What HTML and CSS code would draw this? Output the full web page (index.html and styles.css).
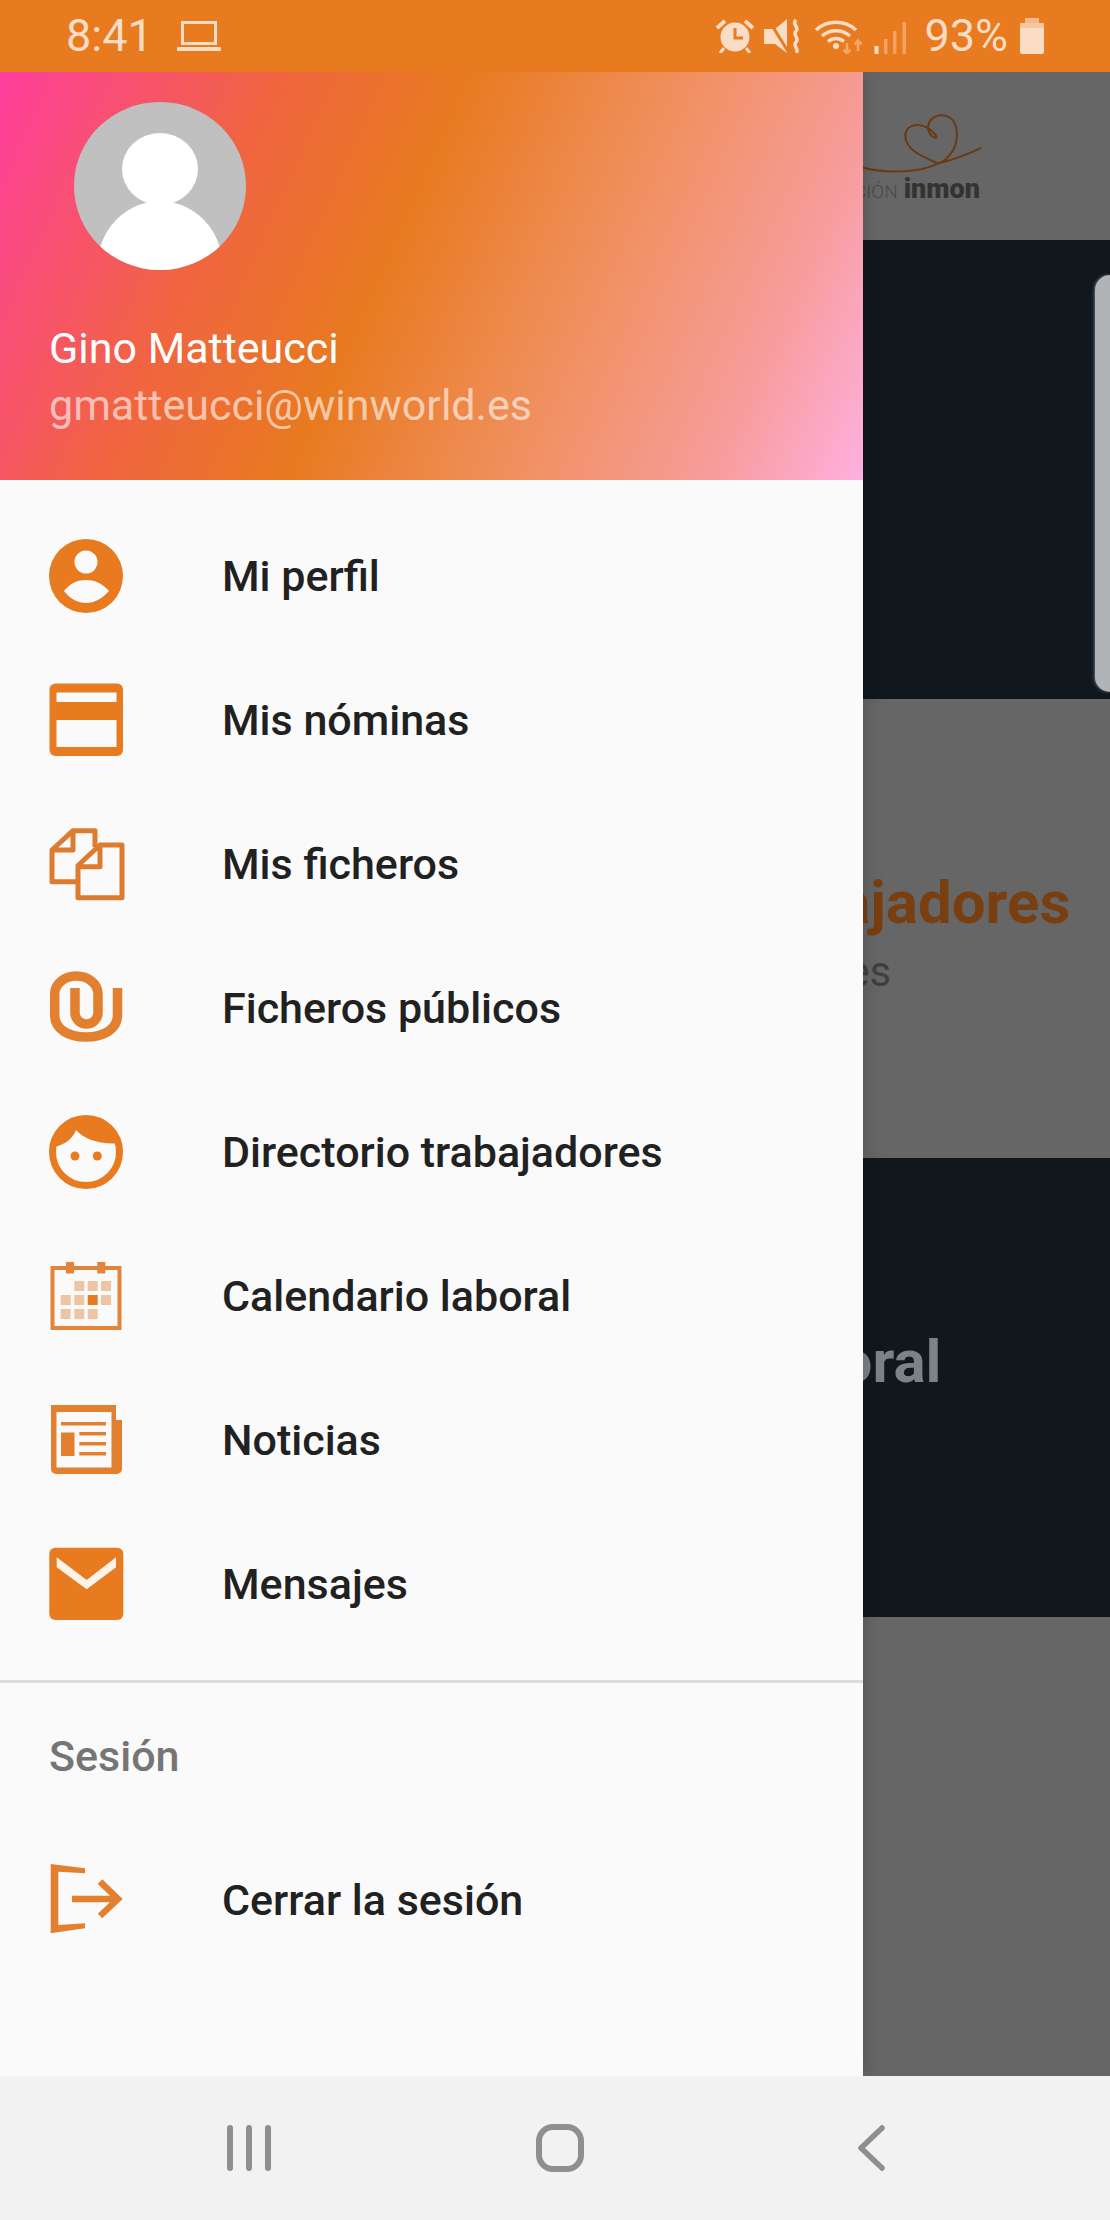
FILE: index.html
```html
<!DOCTYPE html>
<html lang="es">
<head>
<meta charset="utf-8">
<title>Menú</title>
<link rel="stylesheet" href="styles.css">
</head>
<body>
<div class="phone">
  <header class="status">
    <div class="status-left">
      <span class="status-text">8:41</span>
      <svg class="st-laptop" width="44" height="31" viewBox="0 0 44 31"><rect x="5.500" y="1.500" width="33" height="21" fill="none" stroke="#fbdcc4" stroke-width="3"/><rect x="0" y="26" width="44" height="4" rx="1" fill="#fbdcc4"/></svg>
    </div>
    <div class="status-right">
      <svg class="st-alarm" width="39" height="34" viewBox="0 0 39 34"><circle cx="20" cy="18" r="14.500" fill="#fbdcc4"/><path d="M20 9V19H28" fill="none" stroke="#e87a20" stroke-width="3"/><path d="M2 9L10 2M30 2L38 9" stroke="#fbdcc4" stroke-width="4" fill="none"/><path d="M9 29L5 34M31 29L35 34" stroke="#fbdcc4" stroke-width="3" fill="none"/></svg>
      <svg class="st-mute" width="36" height="34" viewBox="0 0 36 34"><path d="M0 10H11L23 0V34L11 25H0Z" fill="#fbdcc4"/><path d="M4 0L25 34" stroke="#e87a20" stroke-width="3"/><path d="M32 1C27 5 36 8 32 12C28 16 36 19 32 23C28 27 36 30 32 34" fill="none" stroke="#fbdcc4" stroke-width="3.500"/></svg>
      <svg class="st-wifi" width="49" height="36" viewBox="0 0 49 36"><path d="M1 12A30 30 0 0 1 41 12M7 18A21 21 0 0 1 35 18M13 23.500A12 12 0 0 1 29 23.500" fill="none" stroke="#fbdcc4" stroke-width="3.500"/><circle cx="21" cy="28" r="3" fill="#fbdcc4"/><path d="M32 25V35M28.500 31.500L32 35.500L35.500 31.500M43 33V23M39.500 26.500L43 22.500L46.500 26.500" fill="none" stroke="#f6a765" stroke-width="2.500"/></svg>
      <svg class="st-signal" width="33" height="33" viewBox="0 0 33 33"><rect x="0.500" y="25" width="4" height="8" fill="#fbdcc4"/><rect x="10" y="18" width="3.500" height="15" fill="#f3a262"/><rect x="19" y="10" width="3.500" height="23" fill="#f3a262"/><rect x="28.500" y="1" width="3.500" height="32" fill="#f3a262"/></svg>
      <span class="status-text st-pct">93%</span>
      <svg class="st-batt" width="24" height="36" viewBox="0 0 24 36"><rect x="5" y="0" width="14" height="5" fill="#f4b98a"/><rect x="0" y="5" width="24" height="31" rx="2" fill="#fbdcc4"/><rect x="0" y="5" width="24" height="5" rx="2" fill="#f4c7a2"/></svg>
    </div>
  </header>

  <main class="stage">
    <div class="appbar">
      <svg class="logo-mark" width="246" height="168" viewBox="11 36 739 504"><path d="M11 323C80 340 180 340 235 310C190 290 135 270 137 225C140 190 190 180 228 225C240 240 210 235 205 205C205 170 240 160 265 170C300 185 300 250 270 285C260 297 245 310 235 310C280 300 330 280 362 265" fill="none" stroke="#6b3a10" stroke-width="6" stroke-linecap="round"/></svg>
      <div class="logo-text"><span class="logo-thin">FUNDACIÓN</span> <span class="logo-bold">inmon</span></div>
    </div>
    <section class="band band-dark band-top"><div class="peek-card"></div></section>
    <section class="band band-gray">
      <h2 class="band-title band-title-orange">Directorio trabajadores</h2>
      <p class="band-sub">Listado de trabajadores</p>
    </section>
    <section class="band band-dark">
      <h2 class="band-title band-title-light">Calendario laboral</h2>
    </section>
    <section class="band band-gray"></section>

    <aside class="drawer">
      <div class="drawer-head">
        <div class="avatar">
          <svg width="172" height="168" viewBox="0 0 172 168"><ellipse cx="86" cy="67" rx="38" ry="36" fill="#fff"/><path d="M20 168L27 143C36 115 62 99 86 99C110 99 136 115 145 143L152 168Z" fill="#fff"/></svg>
        </div>
        <div class="user-name">Gino Matteucci</div>
        <div class="user-mail">gmatteucci@winworld.es</div>
      </div>
      <nav class="menu">
        <a class="row">
          <svg class="ico" width="110" height="110" viewBox="0 0 110 110"><circle cx="56" cy="55" r="37" fill="#e87a20"/><circle cx="56" cy="41" r="11.500" fill="#fafafa"/><path d="M34 70C40 62 48 59 56 59C64 59 72 62 79 70C72 78 64 82 56 82C48 82 40 78 34 70Z" fill="#fafafa"/></svg>
          <span class="label">Mi perfil</span>
        </a>
        <a class="row">
          <svg class="ico" width="110" height="110" viewBox="0 0 110 110"><rect x="19.500" y="18.500" width="73.500" height="72.500" rx="6" fill="#e87a20"/><rect x="26.500" y="27.500" width="60" height="9.500" fill="#fafafa"/><rect x="26.500" y="55" width="60" height="27" fill="#fafafa"/></svg>
          <span class="label">Mis nóminas</span>
        </a>
        <a class="row">
          <svg class="ico" width="110" height="110" viewBox="0 0 110 110"><g fill="none" stroke="#dd7c2f" stroke-width="5" stroke-linejoin="round"><path d="M48 72.700H22V41L43 21.700H65V38M22 41H43V22"/><path d="M48 56.500L70 36H92V88.700H48ZM48 57.700H70V36" fill="#fafafa"/></g></svg>
          <span class="label">Mis ficheros</span>
        </a>
        <a class="row">
          <svg class="ico" width="110" height="110" viewBox="0 0 110 110"><path d="M45 35V60A11.500 11 0 0 0 68 60V41A21.650 18 0 0 0 24.700 41V62C24.700 76 38 84 56 84C74 84 87.500 76 87.500 62V35" fill="none" stroke="#e2802f" stroke-width="9.500"/></svg>
          <span class="label">Ficheros públicos</span>
        </a>
        <a class="row">
          <svg class="ico" width="110" height="110" viewBox="0 0 110 110"><circle cx="56" cy="55" r="33.500" fill="#fafafa" stroke="#e87a20" stroke-width="7"/><path d="M21 50C30 50 42 44 46 33C54 42 70 48 91 46A37 37 0 0 0 21 50Z" fill="#e87a20"/><circle cx="45" cy="59" r="4.500" fill="#e87a20"/><circle cx="67.300" cy="59" r="4.500" fill="#e87a20"/></svg>
          <span class="label">Directorio trabajadores</span>
        </a>
        <a class="row">
          <svg class="ico" width="110" height="110" viewBox="0 0 110 110"><rect x="22.500" y="27" width="67" height="60" fill="none" stroke="#e2853a" stroke-width="4"/><rect x="36" y="21" width="8" height="11.500" fill="#e2853a"/><rect x="67.300" y="21" width="8" height="11.500" fill="#e2853a"/><g fill="#eec4a5"><rect x="44.300" y="40" width="10" height="10"/><rect x="57.700" y="40" width="10" height="10"/><rect x="71" y="40" width="10" height="10"/><rect x="30.700" y="54" width="10" height="10"/><rect x="44.300" y="54" width="10" height="10"/><rect x="71" y="54" width="10" height="10"/><rect x="30.700" y="68" width="10" height="10"/><rect x="44.300" y="68" width="10" height="10"/><rect x="57.700" y="68" width="10" height="10"/></g><rect x="57.700" y="54" width="10" height="10" fill="#e87a20"/></svg>
          <span class="label">Calendario laboral</span>
        </a>
        <a class="row">
          <svg class="ico" width="110" height="110" viewBox="0 0 110 110"><path d="M21 20H86V35H92V84A5 5 0 0 1 87 89H26A5 5 0 0 1 21 84Z" fill="#e2802f"/><rect x="26.500" y="27" width="55" height="55.500" fill="#fafafa"/><g fill="#e2802f"><rect x="31" y="37" width="45" height="3.500"/><rect x="31" y="47.500" width="13.500" height="23.500"/><rect x="49.300" y="47" width="26.700" height="3.500"/><rect x="49.300" y="57" width="26.700" height="3.500"/><rect x="49.300" y="67" width="26.700" height="3.500"/></g></svg>
          <span class="label">Noticias</span>
        </a>
        <a class="row">
          <svg class="ico" width="110" height="110" viewBox="0 0 110 110"><rect x="19.300" y="18.700" width="74" height="72.300" rx="6" fill="#e87a20"/><path d="M26.700 28.300L56.700 51L86 28.300V38.300L56.700 60.300L26.700 38.300Z" fill="#fdf3e8"/></svg>
          <span class="label">Mensajes</span>
        </a>
      </nav>
      <div class="menu-sep"></div>
      <div class="section-title">Sesión</div>
      <a class="row">
        <svg class="ico" width="110" height="110" viewBox="0 0 110 110"><path d="M20.700 19L55 23.300V28.300L28.300 26.700V80L55 78.300V83.300L20.700 88.300Z" fill="#e2802f"/><path d="M42 54H87M70 36.700L88 54L70 71" fill="none" stroke="#e2802f" stroke-width="6.500"/></svg>
        <span class="label">Cerrar la sesión</span>
      </a>
    </aside>
  </main>

  <footer class="navbar">
    <div class="nav-slot"><svg width="46" height="46" viewBox="0 0 46 46"><path d="M4 3V43M23 3V43M42 3V43" fill="none" stroke="#8f8f8f" stroke-width="6" stroke-linecap="round"/></svg></div>
    <div class="nav-slot"><svg width="50" height="50" viewBox="0 0 50 50"><rect x="4" y="4" width="42" height="42" rx="14" fill="none" stroke="#8f8f8f" stroke-width="6"/></svg></div>
    <div class="nav-slot"><svg width="30" height="46" viewBox="0 0 30 46"><path d="M26 3L5 23L26 43" fill="none" stroke="#8f8f8f" stroke-width="5.500" stroke-linecap="round" stroke-linejoin="round"/></svg></div>
  </footer>
</div>
</body>
</html>
```
FILE: styles.css
```css
* { box-sizing: border-box; }
html, body { margin: 0; padding: 0; }
body { font-family: Roboto, "Liberation Sans", sans-serif; background: #f2f2f2; }

.phone { width: 1110px; height: 2220px; display: flex; flex-direction: column; overflow: hidden; }

.status { height: 72px; flex: none; background: #e87a20; display: flex; justify-content: space-between; align-items: center; padding: 0 66px; color: #fbdcc4; }
.status-left, .status-right { display: flex; align-items: center; }
.status-text { font-size: 45px; line-height: 72px; font-weight: 400; }
.st-laptop { margin-left: 24px; }
.st-mute { margin-left: 10px; }
.st-wifi { margin-left: 15px; }
.st-signal { margin-left: 10px; margin-top: 2px; }
.st-pct { margin-left: 17px; }
.st-batt { margin-left: 12px; }

.stage { position: relative; flex: 1; display: flex; flex-direction: column; overflow: hidden; background: #666; }

.appbar { height: 168px; flex: none; background: #666; position: relative; overflow: hidden; }
.logo-mark { display: block; margin-left: auto; width: 247px; }
.logo-text { position: absolute; right: 130px; top: 100px; white-space: nowrap; line-height: 34px; color: #333; }
.logo-thin { font-size: 19px; font-weight: 300; color: #4a4a4a; }
.logo-bold { font-size: 27px; font-weight: 900; margin-left: 2px; }

.band { height: 459px; flex: none; padding: 169px 0 0 451px; }
.band-gray { background: #666; }
.band-dark { background: #10181e; }
.band-top { display: flex; justify-content: flex-end; padding: 35px 0 7px 0; height: 459px; }
.peek-card { width: 15px; background: #b0b4b6; border-radius: 20px 0 0 20px; box-shadow: -1px 0 3px rgba(176,180,182,.5); }
.band-title { margin: 0; font-size: 60px; line-height: 70px; font-weight: 700; white-space: nowrap; }
.band-title-orange { color: #7a3f10; }
.band-title-light { color: #7d8286; }
.band-sub { margin: 7px 0 0; font-size: 42px; line-height: 54px; color: #3f3f3f; white-space: nowrap; }

.drawer { position: absolute; left: 0; top: 0; bottom: 0; width: 863px; background: #fafafa; box-shadow: 0 0 18px rgba(0,0,0,.22); }
.drawer-head { height: 408px; padding: 30px 0 0 49px; background: linear-gradient(114deg, #ff3e9e 0%, #f0653f 27%, #e87a20 45%, #f0905f 66%, #f79c9a 85%, #ffb0e0 100%); }
.avatar { width: 172px; height: 168px; margin-left: 25px; border-radius: 50%; background: #c0c0c0; overflow: hidden; }
.avatar svg { display: block; }
.user-name { margin-top: 50px; font-size: 43px; line-height: 57px; color: #fff; }
.user-mail { font-size: 43px; line-height: 57px; color: rgba(255,255,255,.6); }

.menu { padding-top: 24px; }
.row { display: flex; align-items: center; height: 144px; padding-left: 30px; }
.ico { flex: none; }
.label { margin-left: 82px; font-size: 43px; font-weight: 500; color: #212121; white-space: nowrap; }
.menu-sep { height: 3px; margin-top: 24px; background: #dcdcdc; }
.section-title { height: 145px; padding-left: 49px; display: flex; align-items: center; font-size: 43px; font-weight: 500; color: #757575; }

.navbar { height: 144px; flex: none; background: #f2f2f2; display: flex; justify-content: center; align-items: center; padding: 0 0 0 10px; }
.nav-slot { width: 311px; display: flex; justify-content: center; align-items: center; }
.nav-slot svg { display: block; }
```
